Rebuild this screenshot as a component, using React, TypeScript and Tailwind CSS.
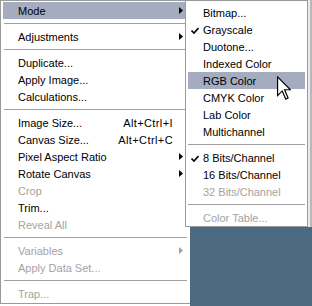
import React from "react";

type Item =
  | { sep: true }
  | {
      sep?: false;
      label: string;
      shortcut?: string;
      arrow?: boolean;
      disabled?: boolean;
      hi?: boolean;
      check?: boolean;
    };

const mainItems: Item[] = [
  { label: "Mode", arrow: true, hi: true },
  { sep: true },
  { label: "Adjustments", arrow: true },
  { sep: true },
  { label: "Duplicate..." },
  { label: "Apply Image..." },
  { label: "Calculations..." },
  { sep: true },
  { label: "Image Size...", shortcut: "Alt+Ctrl+I" },
  { label: "Canvas Size...", shortcut: "Alt+Ctrl+C" },
  { label: "Pixel Aspect Ratio", arrow: true },
  { label: "Rotate Canvas", arrow: true },
  { label: "Crop", disabled: true },
  { label: "Trim..." },
  { label: "Reveal All", disabled: true },
  { sep: true },
  { label: "Variables", arrow: true, disabled: true },
  { label: "Apply Data Set...", disabled: true },
  { sep: true },
  { label: "Trap...", disabled: true },
];

const subItems: Item[] = [
  { label: "Bitmap..." },
  { label: "Grayscale", check: true },
  { label: "Duotone..." },
  { label: "Indexed Color" },
  { label: "RGB Color", hi: true },
  { label: "CMYK Color" },
  { label: "Lab Color" },
  { label: "Multichannel" },
  { sep: true },
  { label: "8 Bits/Channel", check: true },
  { label: "16 Bits/Channel" },
  { label: "32 Bits/Channel", disabled: true },
  { sep: true },
  { label: "Color Table...", disabled: true },
];

function MenuList({ items, sepClass }: { items: Item[]; sepClass: string }) {
  return (
    <div className="flex flex-col">
      {items.map((it, i) =>
        it.sep ? (
          <div key={i} className="h-[9px] flex items-center">
            <div className={`h-px flex-1 bg-[#a0a0a0] ${sepClass}`} />
          </div>
        ) : (
          <div
            key={i}
            className={`flex items-start h-[17px] pt-[2px] leading-[15px] mx-[2px] whitespace-nowrap ${
              it.hi ? "bg-[#a5acc0]" : ""
            } ${it.disabled ? "text-[#a3a3a3]" : "text-black"}`}
          >
            <div className="w-[15px] shrink-0 pl-[3px] pt-[4px]">
              {it.check && (
                <svg width="8" height="8" viewBox="0 0 8 8" className="block">
                  <path d="M0.5 3.5 L3 6 L7.5 1" stroke="#000" strokeWidth="1.6" fill="none" />
                </svg>
              )}
            </div>
            <span className="flex-1">{it.label}</span>
            {it.shortcut && (
              <span className="mr-[6px] tracking-[0.4px]">{it.shortcut}</span>
            )}
            <div className="w-[4px] mr-[5px] pt-[3px] shrink-0">
              {it.arrow && (
                <svg width="4" height="7" viewBox="0 0 4 7" className="block">
                  <path d="M0 0 L4 3.5 L0 7 Z" fill={it.disabled ? "#a0a0a0" : "#000"} />
                </svg>
              )}
            </div>
          </div>
        )
      )}
    </div>
  );
}

export default function App() {
  return (
    <div
      className="relative w-[312px] h-[306px] flex bg-white text-[11px] overflow-hidden"
      style={{ fontFamily: '"Liberation Sans", Arial, sans-serif' }}
    >
      <div className="w-[190px] h-[304px] border-l border-b border-t border-[#9a9a9a] pt-[1px] bg-white">
        <MenuList items={mainItems} sepClass="mx-[3px]" />
      </div>
      <div className="flex-1 flex flex-col">
        <div className="h-[227px] bg-[#ebebeb] border-r-2 border-[#b8b8b8]" />
        <div className="flex-1 bg-[#4b6981]" />
      </div>
      <div className="absolute left-[185px] top-0 w-[123px] h-[227px] border border-[#9a9a9a] bg-white pt-[3px]">
        <MenuList items={subItems} sepClass="mx-[2px]" />
      </div>
      <svg
        width="14"
        height="24"
        viewBox="0 0 12 20"
        className="absolute left-[277px] top-[76px]"
      >
        <path
          d="M0.5 0.5 L0.5 16.5 L4.5 12.5 L7.5 19.5 L9.5 18.5 L6.5 11.5 L11.5 11.5 Z"
          fill="#fff"
          stroke="#000"
          strokeWidth="1"
          strokeLinejoin="miter"
        />
      </svg>
    </div>
  );
}
